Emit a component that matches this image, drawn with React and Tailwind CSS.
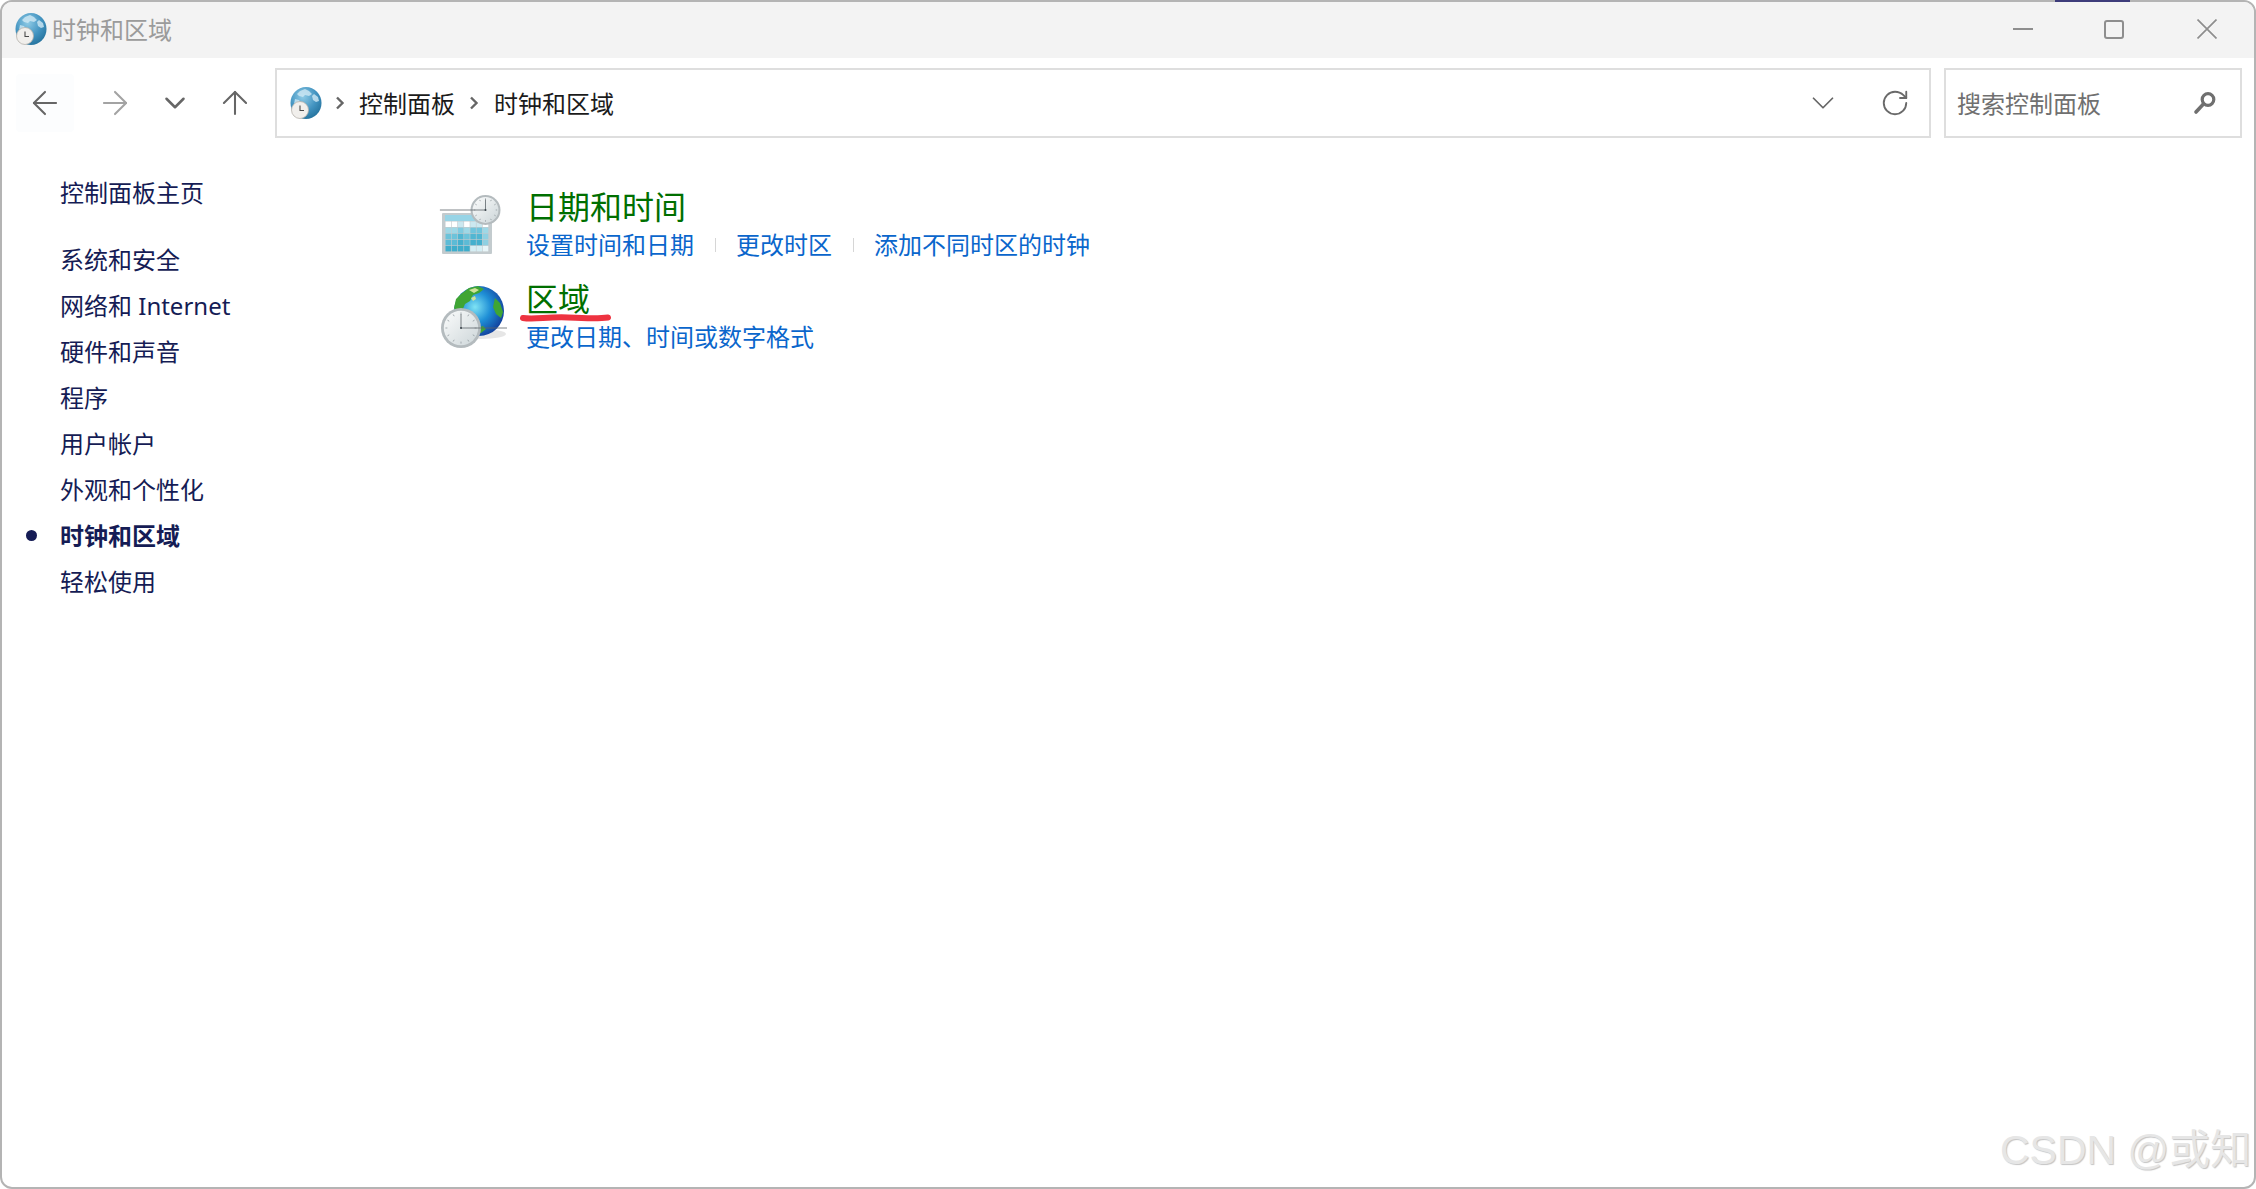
import React from 'react';
import { ArrowLeft, ArrowRight, ArrowUp, ChevronDown, RotateCw } from 'lucide-react';

const sidebarItems = ['系统和安全', '网络和 Internet', '硬件和声音', '程序', '用户帐户', '外观和个性化', '时钟和区域', '轻松使用'];

// small globe with a clock, used in the title bar and the address bar
const SmallGlobe = ({ id }) => (
  <svg width="32" height="32" viewBox="0 0 32 32" className="shrink-0">
    <defs>
      <radialGradient id={id} cx="0.4" cy="0.3" r="0.8">
        <stop offset="0" stopColor="#8fcbe6" />
        <stop offset="0.55" stopColor="#4293c0" />
        <stop offset="1" stopColor="#1f6c96" />
      </radialGradient>
    </defs>
    <ellipse cx="16" cy="16" rx="15.5" ry="16" fill={`url(#${id})`} />
    <path d="M10 4l5-2 4 2 3 3-3 2-4-1-2 2-4-1-2-2zM24 7l4 3 1 4-3 1-3-2-1-4zM5 12l4 1 2 3-3 2-4-1z" fill="#cfe8f4" opacity="0.8" />
    <circle cx="10" cy="23" r="8.5" fill="#f1efec" stroke="#b5b1ab" strokeWidth="0.8" />
    <path d="M10 18.5v5h4" fill="none" stroke="#4a4a4a" strokeWidth="1.1" />
  </svg>
);

const Clock = ({ cx, cy, r, id }) => {
  const ticks = Array.from({ length: 12 }, (_, i) => i * 30);
  return (
    <g>
      <defs>
        <linearGradient id={id} x1="0" y1="0" x2="1" y2="1">
          <stop offset="0" stopColor="#fbfcfc" />
          <stop offset="1" stopColor="#cdd6d9" />
        </linearGradient>
      </defs>
      <circle cx={cx} cy={cy} r={r} fill="#b4bbbe" />
      <circle cx={cx} cy={cy} r={r * 0.86} fill={`url(#${id})`} />
      {ticks.map((a) => (
        <line
          key={a}
          x1={cx}
          y1={cy - r * 0.78}
          x2={cx}
          y2={cy - r * 0.68}
          stroke="#8b9499"
          strokeWidth="0.7"
          transform={`rotate(${a} ${cx} ${cy})`}
        />
      ))}
      <path d={`M${cx} ${cy - r * 0.7}V${cy}H${cx + r * 0.66}`} fill="none" stroke="#5d666b" strokeWidth="0.8" />
      <circle cx={cx} cy={cy} r="1" fill="#39424a" />
    </g>
  );
};

const CalendarIcon = () => {
  // rows of the calendar grid, shade per cell
  const rows = [
    ['#fff', '#fff', '#cbe8f0', '#fff', '#cbe8f0', '#cbe8f0', '#fff'],
    ['#9ed8e6', '#9ed8e6', '#7fcbe0', '#9ed8e6', '#6fc4dc', '#6fc4dc', '#9ed8e6'],
    ['#6cc3da', '#6cc3da', '#50b6d2', '#6cc3da', '#50b6d2', '#50b6d2', '#8fd0e2'],
    ['#5cbbd6', '#5cbbd6', '#45b0ce', '#5cbbd6', '#45b0ce', '#45b0ce', '#8fd0e2'],
    ['#3fadcb', '#3fadcb', '#3fadcb', '#3fadcb', '#d5eef4', '#d5eef4', '#e8f5f8'],
  ];
  return (
    <svg width="64" height="60" viewBox="0 0 64 60">
      <rect x="3" y="18" width="50" height="41" rx="1" fill="#c3cbce" />
      <rect x="6" y="20" width="44" height="6" fill="#97d4e6" />
      {rows.map((row, y) =>
        row.map((c, x) => <rect key={`${x}-${y}`} x={6.5 + x * 6.2} y={26.5 + y * 6.1} width="5.6" height="5.5" fill={c} />)
      )}
      <Clock cx="46.5" cy="15" r="15" id="clock-a" />
    </svg>
  );
};

const GlobeClockIcon = () => (
  <svg width="72" height="64" viewBox="0 0 72 64">
    <defs>
      <radialGradient id="earth" cx="0.42" cy="0.42" r="0.62">
        <stop offset="0" stopColor="#7fe3f4" />
        <stop offset="0.5" stopColor="#1f8fd6" />
        <stop offset="1" stopColor="#123f9c" />
      </radialGradient>
    </defs>
    <ellipse cx="46" cy="50" rx="25" ry="5" fill="#9a9a9a" opacity="0.25" />
    <circle cx="44" cy="27" r="25" fill="url(#earth)" />
    <path d="M26 10l8-6 9-2 6 3-5 4-6 2-3 6-5 3-3 7-4 2-4-5 2-9zM60 14l5 5 3 9-2 6-5-4-3-7zM42 44l6-2 3 3-5 4-4-1z" fill="#3fa534" />
    <path d="M34 6l6-2 4 2-5 3zM36 14l4-2 1 3-3 2z" fill="#cfe39a" />
    <Clock cx="26" cy="44" r="20" id="clock-b" />
  </svg>
);

const SearchIcon = () => (
  <svg width="24" height="24" viewBox="0 0 24 24">
    <circle cx="15" cy="8.5" r="5.8" fill="none" stroke="#6f6f6f" strokeWidth="3.2" />
    <path d="M10 13.5L3 21" stroke="#6f6f6f" strokeWidth="3.6" strokeLinecap="round" />
  </svg>
);

const Sep = () => <span className="ml-[21px] mr-[20px] mt-[1px] h-[14px] w-px bg-[#d6d6d6]" />;

const Crumb = () => (
  <svg width="10" height="14" viewBox="0 0 10 14" className="shrink-0">
    <path d="M2 1.5L7.5 7L2 12.5" fill="none" stroke="#666" strokeWidth="2.4" />
  </svg>
);

const App = () => {
  return (
    <div className="relative h-[1189px] w-[2256px] overflow-hidden bg-white font-['Noto_Sans_CJK_SC',sans-serif]">
      <div className="absolute right-[126px] top-0 z-10 h-[2px] w-[75px] bg-[#3d3c7a]" />
      <div className="flex h-full w-full flex-col overflow-hidden rounded-[12px] border-2 border-[#b4b4b4]">
        {/* title bar */}
        <div className="flex h-[56px] shrink-0 items-center bg-[#f3f3f3] pb-[2px] pl-[13px]">
          <SmallGlobe id="globe-title" />
          <span className="ml-[5px] text-[24px] leading-[32px] text-[#9b9b9b]">时钟和区域</span>
          <div className="ml-auto flex items-center pr-[37px]">
            <span className="h-[2px] w-[20px] bg-[#8e8e8e]" />
            <span className="ml-[71px] h-[19px] w-[20px] rounded-[3px] border-2 border-[#8e8e8e]" />
            <svg width="20" height="20" viewBox="0 0 20 20" className="ml-[73px]">
              <path d="M0.5 0.5L19.5 19.5M19.5 0.5L0.5 19.5" stroke="#8e8e8e" strokeWidth="1.7" />
            </svg>
          </div>
        </div>

        {/* toolbar */}
        <div className="mt-[10px] flex h-[70px] shrink-0 items-center pr-[12px]">
          <div className="ml-[14px] flex h-[58px] w-[58px] items-center justify-center rounded-[4px] bg-[#fcfdfe]">
            <ArrowLeft className="h-[38px] w-[38px] text-[#666]" strokeWidth={1.3} />
          </div>
          <div className="ml-[11px] flex w-[60px] justify-center">
            <ArrowRight className="h-[38px] w-[38px] text-[#a3a3a3]" strokeWidth={1.3} />
          </div>
          <div className="flex w-[60px] justify-center">
            <ChevronDown className="h-[34px] w-[34px] text-[#666]" strokeWidth={1.8} />
          </div>
          <div className="flex w-[60px] justify-center">
            <ArrowUp className="h-[38px] w-[38px] text-[#666]" strokeWidth={1.3} />
          </div>

          <div className="ml-[10px] flex h-full flex-1 items-center border-2 border-[#dedede] pl-[13px]">
            <SmallGlobe id="globe-address" />
            <span className="ml-[13px]"><Crumb /></span>
            <span className="ml-[14px] text-[24px] leading-[32px] text-[#1b1b1b]">控制面板</span>
            <span className="ml-[14px]"><Crumb /></span>
            <span className="ml-[15px] text-[24px] leading-[32px] text-[#1b1b1b]">时钟和区域</span>
            <ChevronDown className="ml-auto h-[38px] w-[38px] text-[#666]" strokeWidth={1.1} />
            <RotateCw className="ml-[38px] mr-[19px] h-[30px] w-[30px] text-[#6a6a6a]" strokeWidth={1.5} />
          </div>

          <div className="ml-[13px] flex h-full w-[298px] items-center border-2 border-[#dedede] pl-[11px] pr-[23px]">
            <span className="text-[24px] leading-[32px] text-[#707070]">搜索控制面板</span>
            <span className="ml-auto"><SearchIcon /></span>
          </div>
        </div>

        <div className="flex flex-1 pt-[31px]">
          {/* sidebar */}
          <div className="w-[426px] shrink-0 pl-[58px] pt-[1px] font-['Noto_Sans','Noto_Sans_CJK_SC',sans-serif] text-[24px] leading-[46px] text-[#151c55]">
            <div className="mb-[21px]">控制面板主页</div>
            {sidebarItems.map((item) => (
              <div key={item} className={`relative ${item === '时钟和区域' ? 'font-bold' : ''}`}>
                {item === '时钟和区域' && (
                  <span className="absolute left-[-34px] top-[17px] h-[11px] w-[11px] rounded-full bg-[#151c55]" />
                )}
                {item}
              </div>
            ))}
          </div>

          {/* categories */}
          <div className="flex flex-col gap-[16px] pt-[15px]">
            <div className="flex">
              <div className="mt-[11px] h-[60px] w-[98px] shrink-0 pl-[11px]">
                <CalendarIcon />
              </div>
              <div>
                <div className="pb-[2px] text-[32px] leading-[42px] text-[#006f00]">日期和时间</div>
                <div className="flex items-center text-[24px] leading-[32px] text-[#0a66cc]">
                  <span>设置时间和日期</span>
                  <Sep />
                  <span>更改时区</span>
                  <Sep />
                  <span>添加不同时区的时钟</span>
                </div>
              </div>
            </div>
            <div className="flex">
              <div className="mt-[8px] h-[64px] w-[98px] shrink-0 pl-[7px]">
                <GlobeClockIcon />
              </div>
              <div className="relative">
                <div className="pb-[2px] text-[32px] leading-[42px] text-[#006f00]">区域</div>
                {/* hand drawn red underline */}
                <svg width="96" height="12" viewBox="0 0 96 12" className="absolute left-[-8px] top-[36px]">
                  <path d="M5 6C16 8 30 4.5 50 5.5S80 7 90 5.5" fill="none" stroke="#ee3340" strokeWidth="6" strokeLinecap="round" />
                </svg>
                <div className="text-[24px] leading-[32px] text-[#0a66cc]">更改日期、时间或数字格式</div>
              </div>
            </div>
          </div>
        </div>
      </div>

      {/* watermark */}
      <div className="absolute left-[2000px] top-[1120px] whitespace-nowrap font-['Liberation_Sans','Noto_Sans_CJK_SC',sans-serif] text-[41px] leading-[60px] text-[#e6e6e6] [text-shadow:1px_1px_1px_#c4c4c4]">
        CSDN @或知
      </div>
    </div>
  );
};

export default App;
